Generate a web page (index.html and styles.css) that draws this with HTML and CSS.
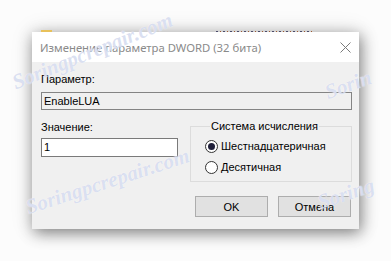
FILE: index.html
```html
<!DOCTYPE html>
<html lang="ru">
<head>
<meta charset="utf-8">
<title>Изменение параметра DWORD</title>
<link rel="stylesheet" href="styles.css">
</head>
<body>
<div class="screen">
  <div class="behind">
    <span class="folder"></span>
    <span class="cut-text"></span>
  </div>
  <div class="dialog">
    <div class="titlebar">
      <span class="title">Изменение параметра DWORD (32 бита)</span>
      <svg class="close" width="11" height="11" viewBox="0 0 11 11"><path d="M0.5 0.5 L10.5 10.5 M10.5 0.5 L0.5 10.5" stroke="#7a7a7a" stroke-width="1" fill="none"/></svg>
    </div>
    <div class="content">
      <div class="label">Параметр:</div>
      <div class="field readonly">EnableLUA</div>
      <div class="row">
        <div class="valcol">
          <div class="label">Значение:</div>
          <div class="field input">1</div>
        </div>
        <fieldset class="group">
          <legend>Система исчисления</legend>
          <div class="radio"><span class="dot checked"></span>Шестнадцатеричная</div>
          <div class="radio"><span class="dot"></span>Десятичная</div>
        </fieldset>
      </div>
      <div class="buttons">
        <button class="btn">OK</button>
        <button class="btn">Отмена</button>
      </div>
    </div>
  </div>
  <span class="wm wm1">Soringpcrepair.com</span>
  <span class="wm wm2">Soringpcrepair.com</span>
  <span class="wm wm3">Sorin</span>
  <span class="wm wm4">Soring</span>
</div>
</body>
</html>
```

FILE: styles.css
```css
html, body {
  margin: 0;
  padding: 0;
  background: #fcfcfc;
}

.screen {
  position: relative;
  width: 391px;
  height: 261px;
  overflow: hidden;
  background: #fcfcfc;
  font-family: "Liberation Sans", Arial, sans-serif;
  font-size: 11px;
  color: #000;
}

.behind {
  display: flex;
  height: 2px;
  margin-top: 30px;
  padding-left: 41px;
}

.folder {
  width: 11px;
  height: 2px;
  background: #e8c15a;
}

.cut-text {
  width: 96px;
  height: 1px;
  margin-top: 1px;
  margin-left: 164px;
  background: repeating-linear-gradient(90deg, #4a4a6a 0 2px, transparent 2px 4px, #a05a30 4px 5px, transparent 5px 7px);
}

.dialog {
  width: 327px;
  margin-left: 32px;
  background: #f0f0f0;
  box-shadow: 2px 4px 14px rgba(0, 0, 0, 0.45), 0 0 22px rgba(0, 0, 0, 0.12);
}

.titlebar {
  height: 30px;
  background: #ffffff;
  display: flex;
  align-items: center;
  justify-content: space-between;
  padding: 0 8px 0 8px;
}

.title {
  font-family: "Noto Sans", "Open Sans", sans-serif;
  font-size: 11.3px;
  color: #8a8a8a;
  margin-top: 1px;
}

.close {
  display: block;
  margin-top: 1px;
}

.content {
  padding: 11px 7px 12px 9px;
}

.label {
  line-height: 13px;
  height: 13px;
}

.field {
  box-sizing: border-box;
  display: flex;
  align-items: center;
  padding-left: 2px;
  line-height: 13px;
  border: 1px solid #7a7a7a;
}

.field.readonly {
  margin-top: 6px;
  height: 18px;
  background: #f0f0f0;
  border-color: #848484;
}

.field.input {
  margin-top: 4px;
  height: 19px;
  background: #ffffff;
}

.row {
  display: flex;
  justify-content: space-between;
  align-items: flex-start;
  margin-top: 10px;
}

.valcol {
  width: 137px;
  padding-top: 1px;
}

.group {
  box-sizing: border-box;
  width: 162px;
  margin: 0;
  padding: 5px 4px 5px 14px;
  border: 1px solid #dcdcdc;
  min-width: 0;
}

.group legend {
  padding: 0 1px;
  margin-left: 5px;
  line-height: 13px;
}

.radio {
  display: flex;
  align-items: center;
  height: 17px;
  line-height: 13px;
}

.radio + .radio {
  margin-top: 4px;
}

.dot {
  box-sizing: border-box;
  width: 13px;
  height: 13px;
  border: 1px solid #333333;
  border-radius: 50%;
  background: #ffffff;
  margin-right: 3px;
  display: flex;
  align-items: center;
  justify-content: center;
}

.dot.checked::after {
  content: "";
  width: 7px;
  height: 7px;
  border-radius: 50%;
  background: #1f1f3a;
}

.buttons {
  display: flex;
  justify-content: flex-end;
  gap: 10px;
  margin-top: 14px;
  padding-right: 1px;
}

.btn {
  box-sizing: border-box;
  width: 73px;
  height: 21px;
  margin: 0;
  padding: 0;
  background: #e1e1e1;
  border: 1px solid #adadad;
  font-family: "Liberation Sans", Arial, sans-serif;
  font-size: 11px;
  color: #000;
}

.wm {
  position: absolute;
  font-family: "Liberation Serif", serif;
  font-style: italic;
  font-weight: bold;
  font-size: 21px;
  color: rgba(150, 165, 215, 0.35);
  text-shadow: 0 0 1px #ffffff;
  white-space: nowrap;
  transform-origin: left bottom;
  pointer-events: none;
}

.wm1 { left: 18px; top: 70px; transform: rotate(-22deg); }
.wm2 { left: 30px; top: 195px; transform: rotate(-18deg); }
.wm3 { left: 330px; top: 80px; transform: rotate(-20deg); }
.wm4 { left: 322px; top: 190px; transform: rotate(-18deg); }
```
